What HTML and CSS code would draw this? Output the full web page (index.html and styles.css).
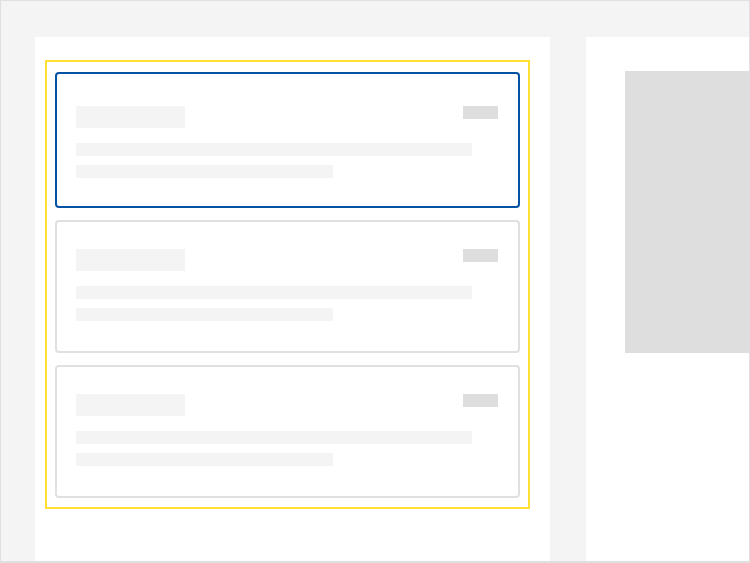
FILE: index.html
```html
<!DOCTYPE html>
<html lang="en">
<head>
<meta charset="utf-8">
<title>Skeleton list</title>
<link rel="stylesheet" href="styles.css">
</head>
<body>
<div class="frame">
  <section class="panel panel--list">
    <div class="focus-area">
      <div class="card card--selected">
        <div class="card-head">
          <div class="sk sk-title"></div>
          <div class="sk sk-tag"></div>
        </div>
        <div class="sk sk-line sk-line--long"></div>
        <div class="sk sk-line sk-line--short"></div>
      </div>
      <div class="card">
        <div class="card-head">
          <div class="sk sk-title"></div>
          <div class="sk sk-tag"></div>
        </div>
        <div class="sk sk-line sk-line--long"></div>
        <div class="sk sk-line sk-line--short"></div>
      </div>
      <div class="card">
        <div class="card-head">
          <div class="sk sk-title"></div>
          <div class="sk sk-tag"></div>
        </div>
        <div class="sk sk-line sk-line--long"></div>
        <div class="sk sk-line sk-line--short"></div>
      </div>
    </div>
  </section>
  <section class="panel panel--detail">
    <div class="sk-block"></div>
  </section>
</div>
</body>
</html>
```
FILE: styles.css
```css
* { box-sizing: border-box; }
html, body { margin: 0; padding: 0; }
body {
  font-family: "Liberation Sans", Arial, sans-serif;
  background: #f4f4f4;
}
.frame {
  width: 750px;
  height: 563px;
  border: 1px solid #e0e0e0;
  border-bottom-width: 2px;
  background: #f4f4f4;
  display: flex;
  gap: 36px;
  padding: 36px 0 0 34px;
  overflow: hidden;
}
.panel {
  background: #ffffff;
}
.panel--list {
  width: 515px;
  flex: none;
  padding: 23px 20px 0 10px;
}
.panel--detail {
  flex: 1;
  padding: 34px 0 0 39px;
}
.focus-area {
  border: 2px solid #ffe033;
  padding: 10px 8px 9px 8px;
  display: flex;
  flex-direction: column;
  gap: 12px;
}
.card {
  height: 133px;
  border: 2px solid #e0e0e0;
  border-radius: 4px;
  padding: 27px 20px 0 19px;
  background: #fff;
}
.card--selected {
  height: 136px;
  border-color: #0353a4;
  padding-top: 32px;
}
.card-head {
  display: flex;
  justify-content: space-between;
  align-items: flex-start;
}
.sk { background: #f4f4f4; }
.sk-title { width: 109px; height: 22px; }
.sk-tag { width: 35px; height: 13px; background: #dedede; }
.sk-line { height: 13px; }
.sk-line--long { width: 396px; margin-top: 15px; }
.sk-line--short { width: 257px; margin-top: 9px; }
.sk-block {
  height: 282px;
  background: #dedede;
}
```
